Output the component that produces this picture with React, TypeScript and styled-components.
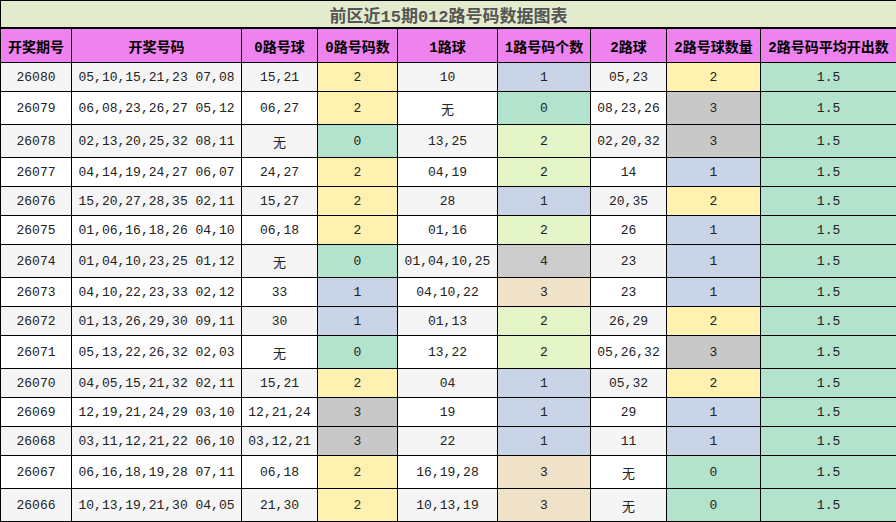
import React from "react";
import styled, { createGlobalStyle } from "styled-components";

const Global = createGlobalStyle`
  html, body { margin: 0; padding: 0; background: #ffffff; }
  body { font-family: "Liberation Mono", "Noto Sans CJK SC", monospace; }
`;

const Table = styled.table`
  width: 896px;
  border-collapse: collapse;
  table-layout: fixed;
  font-family: "Liberation Mono", "Noto Sans CJK SC", monospace;
  font-size: 13px;
  color: #222;
`;

const TitleCell = styled.th`
  background: #e2ebcd;
  color: #555555;
  font-size: 17px;
  font-weight: bold;
  padding: 1px 0 0;
  border: 1px solid #000;
  border-bottom: 2px solid #000;
  text-align: center;
`;

const HeadCell = styled.th`
  background: #ee82ee;
  color: #000;
  font-size: 14px;
  font-weight: bold;
  padding: 7px 0 6px;
  border: 1px solid #000;
  text-align: center;
  white-space: nowrap;
`;

const Row = styled.tr<{ $alt: boolean }>`
  background: ${(p) => (p.$alt ? "#f5f5f5" : "#ffffff")};
`;

const Cell = styled.td<{ $bg?: string }>`
  padding: 7px 0 6px;
  border: 1px solid #000;
  text-align: center;
  white-space: nowrap;
  background: ${(p) => p.$bg ?? "transparent"};
`;

const countColors: Record<number, string> = {
  0: "#b3e3cc",
  1: "#c9d5e6",
  2: "#fff2b0",
  3: "#c8c8c8",
};

const oneColors: Record<number, string> = {
  0: "#b3e3cc",
  1: "#c9d5e6",
  2: "#e4f5c8",
  3: "#f0e1c9",
  4: "#cccccc",
};

type R = [string, string, string, number, string, number, string, number];

const rows: R[] = [
  ["26080", "05,10,15,21,23 07,08", "15,21", 2, "10", 1, "05,23", 2],
  ["26079", "06,08,23,26,27 05,12", "06,27", 2, "无", 0, "08,23,26", 3],
  ["26078", "02,13,20,25,32 08,11", "无", 0, "13,25", 2, "02,20,32", 3],
  ["26077", "04,14,19,24,27 06,07", "24,27", 2, "04,19", 2, "14", 1],
  ["26076", "15,20,27,28,35 02,11", "15,27", 2, "28", 1, "20,35", 2],
  ["26075", "01,06,16,18,26 04,10", "06,18", 2, "01,16", 2, "26", 1],
  ["26074", "01,04,10,23,25 01,12", "无", 0, "01,04,10,25", 4, "23", 1],
  ["26073", "04,10,22,23,33 02,12", "33", 1, "04,10,22", 3, "23", 1],
  ["26072", "01,13,26,29,30 09,11", "30", 1, "01,13", 2, "26,29", 2],
  ["26071", "05,13,22,26,32 02,03", "无", 0, "13,22", 2, "05,26,32", 3],
  ["26070", "04,05,15,21,32 02,11", "15,21", 2, "04", 1, "05,32", 2],
  ["26069", "12,19,21,24,29 03,10", "12,21,24", 3, "19", 1, "29", 1],
  ["26068", "03,11,12,21,22 06,10", "03,12,21", 3, "22", 1, "11", 1],
  ["26067", "06,16,18,19,28 07,11", "06,18", 2, "16,19,28", 3, "无", 0],
  ["26066", "10,13,19,21,30 04,05", "21,30", 2, "10,13,19", 3, "无", 0],
];

const widths = [71, 170, 76, 80, 100, 93, 76, 94, 136];
const headers = [
  "开奖期号",
  "开奖号码",
  "0路号球",
  "0路号码数",
  "1路球",
  "1路号码个数",
  "2路球",
  "2路号球数量",
  "2路号码平均开出数",
];

export default function App() {
  return (
    <>
      <Global />
      <Table>
        <colgroup>
          {widths.map((w, i) => (
            <col key={i} style={{ width: w }} />
          ))}
        </colgroup>
        <thead>
          <tr>
            <TitleCell colSpan={9}>前区近15期012路号码数据图表</TitleCell>
          </tr>
          <tr>
            {headers.map((h) => (
              <HeadCell key={h}>{h}</HeadCell>
            ))}
          </tr>
        </thead>
        <tbody>
          {rows.map((r, i) => (
            <Row key={r[0]} $alt={i % 2 === 0}>
              <Cell>{r[0]}</Cell>
              <Cell>{r[1]}</Cell>
              <Cell>{r[2]}</Cell>
              <Cell $bg={countColors[r[3]]}>{r[3]}</Cell>
              <Cell>{r[4]}</Cell>
              <Cell $bg={oneColors[r[5]]}>{r[5]}</Cell>
              <Cell>{r[6]}</Cell>
              <Cell $bg={countColors[r[7]]}>{r[7]}</Cell>
              <Cell $bg="#b3e3cc">1.5</Cell>
            </Row>
          ))}
        </tbody>
      </Table>
    </>
  );
}
